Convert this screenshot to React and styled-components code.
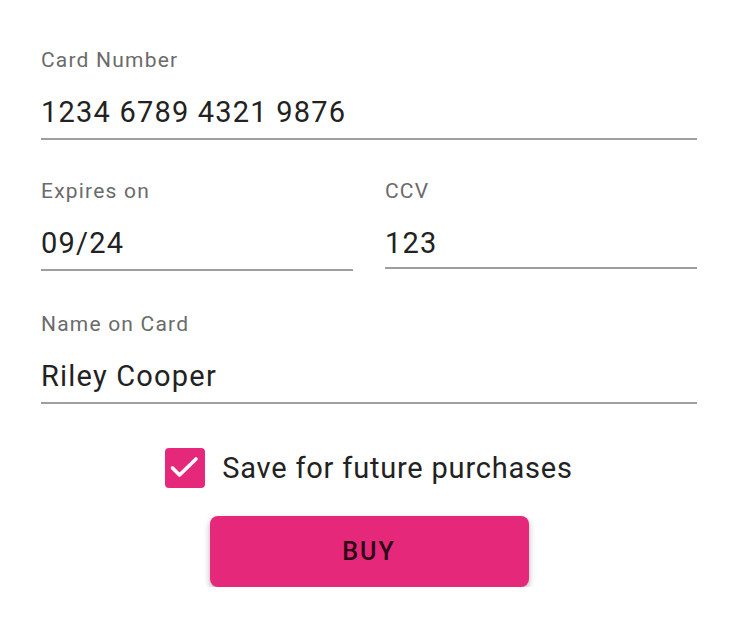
import styled, { createGlobalStyle } from "styled-components";

const GlobalStyle = createGlobalStyle`
  body {
    margin: 0;
    background: #ffffff;
    font-family: Roboto, "Noto Sans", sans-serif;
  }
`;

export default function App() {
  return (
    <>
      <GlobalStyle />
      <Form>
        <Field>
          <Label>Card Number</Label>
          <Value>1234 6789 4321 9876</Value>
        </Field>
        <Row>
          <Field $gap={39}>
            <Label>Expires on</Label>
            <Value>09/24</Value>
          </Field>
          <Field $gap={41}>
            <Label>CCV</Label>
            <Value $short>123</Value>
          </Field>
        </Row>
        <Field>
          <Label>Name on Card</Label>
          <Value>Riley Cooper</Value>
        </Field>
        <CheckRow>
          <Box>
            <svg width="40" height="40" viewBox="0 0 40 40">
              <path
                d="M7.5 20 L14.5 27 L31 11"
                fill="none"
                stroke="#fff"
                strokeWidth="3.6"
                strokeLinecap="round"
                strokeLinejoin="round"
              />
            </svg>
          </Box>
          <CheckText>Save for future purchases</CheckText>
        </CheckRow>
        <BuyButton>BUY</BuyButton>
      </Form>
    </>
  );
}

const Form = styled.div`
  display: flex;
  flex-direction: column;
  width: 656px;
  padding: 46px 43px 0 41px;
`;

const Row = styled.div`
  display: grid;
  grid-template-columns: 1fr 1fr;
  gap: 32px;
  align-items: start;
`;

const Field = styled.div`
  display: flex;
  flex-direction: column;
  border-bottom: 2px solid #9e9e9e;
  margin-bottom: ${(p) => p.$gap ?? 37}px;
`;

const Label = styled.div`
  font-size: 21px;
  line-height: 28px;
  letter-spacing: 1.2px;
  color: #6b6b6b;
`;

const Value = styled.div`
  font-size: 29px;
  line-height: 36px;
  letter-spacing: 1.2px;
  color: #222222;
  padding: ${(p) => (p.$short ? "20px 0 6px" : "20px 0 8px")};
`;

const CheckRow = styled.div`
  display: flex;
  align-items: center;
  justify-content: center;
  gap: 17px;
  margin-top: 7px;
`;

const Box = styled.div`
  width: 40px;
  height: 40px;
  border-radius: 4px;
  background: #e6287a;
  display: flex;
  align-items: center;
  justify-content: center;
`;

const CheckText = styled.span`
  font-size: 29px;
  letter-spacing: 0.8px;
  color: #222222;
`;

const BuyButton = styled.button`
  align-self: center;
  margin-top: 28px;
  width: 319px;
  height: 71px;
  border: none;
  border-radius: 8px;
  background: #e6287a;
  color: #2b0614;
  font-family: Roboto, "Noto Sans", sans-serif;
  font-size: 25px;
  font-weight: 500;
  letter-spacing: 2px;
  box-shadow: 0 3px 6px rgba(0, 0, 0, 0.3);
`;
